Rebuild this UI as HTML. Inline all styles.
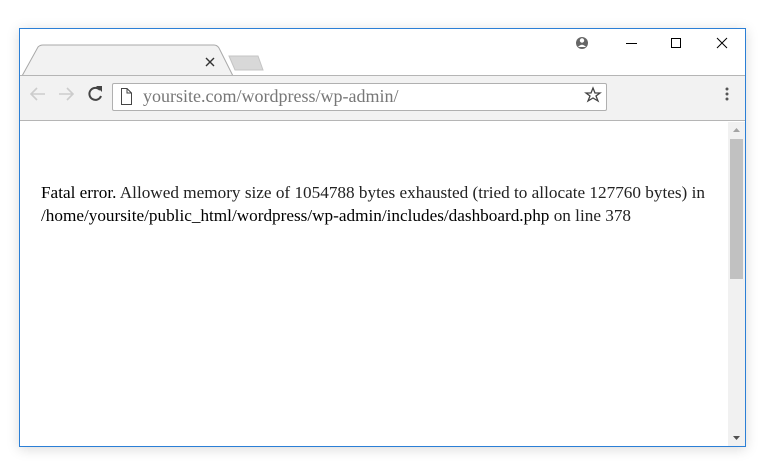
<!DOCTYPE html>
<html><head><meta charset="utf-8"><style>
html,body{margin:0;padding:0;width:778px;height:470px;background:#fff;overflow:hidden;position:relative}
.win{position:absolute;left:19px;top:28px;width:725px;height:417px;border:1px solid #2b7fd6;background:#fff;box-shadow:0 2px 12px rgba(0,0,0,.15)}
.toolbar{position:absolute;left:0;top:46px;width:725px;height:44px;background:#f2f2f2;border-top:1px solid #b5b5b5;border-bottom:1px solid #b5b5b5}
.addr{position:absolute;left:92px;top:7px;width:493px;height:26px;background:#fff;border:1px solid #b0b0b0;border-radius:2px}
.addr span{position:absolute;left:30px;top:2px;font-family:"Liberation Serif","DejaVu Serif",serif;font-size:18px;color:#777}
.content{position:absolute;left:0;top:93px;width:708px;height:324px}
.txt{position:absolute;left:21px;top:59px;font-family:"Liberation Serif","DejaVu Serif",serif;font-size:17.2px;line-height:23px;color:#222;white-space:nowrap}
.txt b{font-weight:normal;color:#000}
.sb{position:absolute;left:708px;top:93px;width:17px;height:324px;background:#f1f1f1}
.thumb{position:absolute;left:2px;top:17px;width:13px;height:140px;background:#c1c1c1}
</style></head><body>
<div class="win">
<svg style="position:absolute;left:0;top:0" width="725" height="50">
<path d="M2 47 L18 18 Q20 16 23 16 L194 16 Q197 16 199 19 L213 47" fill="#f2f2f2" stroke="#a8a8a8" stroke-width="1"/>
<path d="M209 27 L238 27 L243 41 L215 41 Z" fill="#d8d8d8" stroke="#c4c4c4"/>
<path d="M186 29 L194 37 M194 29 L186 37" stroke="#333" stroke-width="1.4"/>
<circle cx="562" cy="14" r="6" fill="#666"/><circle cx="562" cy="11.5" r="2.2" fill="#fff"/><path d="M558 18 Q562 13.5 566 18" fill="#fff"/>
<path d="M606 14.5 L617 14.5" stroke="#000" stroke-width="1"/>
<rect x="651.5" y="9.5" width="9" height="9" fill="none" stroke="#000"/>
<path d="M697 9 L707 19 M707 9 L697 19" stroke="#000" stroke-width="1"/>
</svg>
<div class="toolbar">
<div class="addr"><span>yoursite.com/wordpress/wp-admin/</span></div>
<svg style="position:absolute;left:0;top:0" width="725" height="44">
<path d="M11 18 L25 18 M17 12 L11 18 L17 24" fill="none" stroke="#ccc" stroke-width="1.6"/>
<path d="M39 18 L53 18 M47 12 L53 18 L47 24" fill="none" stroke="#ccc" stroke-width="1.6"/>
<path d="M80 14 A6 6 0 1 0 81 20" fill="none" stroke="#444" stroke-width="2"/><path d="M76 10 L82 10 L82 16 Z" fill="#444"/>
<path d="M101.5 12.5 L107 12.5 L111.5 17 L111.5 28.5 L101.5 28.5 Z M107 12.5 L107 17 L111.5 17" fill="none" stroke="#444" stroke-width="1"/>
<path d="M573 12 L575 17 L580 17 L576 20 L578 25 L573 22 L568 25 L570 20 L566 17 L571 17 Z" fill="none" stroke="#444" stroke-width="1.3"/>
<circle cx="707" cy="13" r="1.5" fill="#555"/><circle cx="707" cy="18" r="1.5" fill="#555"/><circle cx="707" cy="23" r="1.5" fill="#555"/>
</svg>
</div>
<div class="content"><div class="txt"><b>Fatal error.</b> Allowed memory size of 1054788 bytes exhausted (tried to allocate 127760 bytes) in<br><b>/home/yoursite/public_html/wordpress/wp-admin/includes/dashboard.php</b> on line 378</div></div>
<div class="sb"><div class="thumb"></div>
<svg style="position:absolute;left:0;top:0" width="17" height="324"><path d="M5 10 L12 10 L8.5 6 Z" fill="#a3a3a3"/><path d="M5 314 L12 314 L8.5 318 Z" fill="#505050"/></svg></div>
</div>
</body></html>
